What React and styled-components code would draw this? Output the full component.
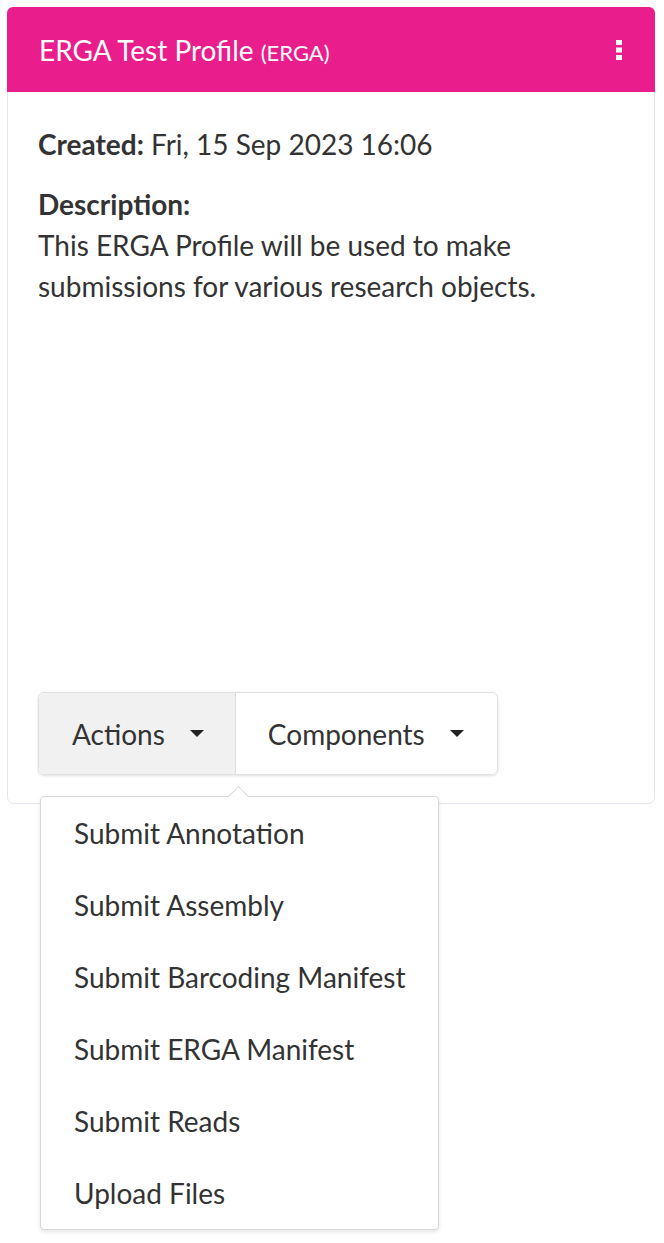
import React from "react";
import styled, { createGlobalStyle } from "styled-components";

const Global = createGlobalStyle`
  html, body { margin: 0; padding: 0; background: #fff; }
  body { font-family: Lato, "Open Sans", sans-serif; color: #333; }
  * { box-sizing: border-box; }
`;

const Page = styled.div`
  padding: 7px 9px 0 7px;
  position: relative;
  min-height: 1243px;
`;

const Card = styled.div`
  width: 648px;
  height: 797px;
  border: 1px solid #e2e7ee;
  border-radius: 7px;
  display: flex;
  flex-direction: column;
  background: #fff;
  position: relative;
`;

const Header = styled.div`
  height: 85px;
  background: #e91e8c;
  border-radius: 6px 6px 0 0;
  margin: -1px -1px 0 -1px;
  display: flex;
  align-items: center;
  justify-content: space-between;
  padding: 0 32px 0 32px;
  color: #fff;
`;

const Title = styled.div`
  font-size: 28px;
  font-weight: 400;
  color: #fff;
`;

const Small = styled.span`
  font-size: 22px;
`;

const Body = styled.div`
  flex: 1;
  display: flex;
  flex-direction: column;
  padding: 32px 30px 28px 30px;
`;

const Line = styled.div`
  font-size: 28px;
  line-height: 41px;
  margin-bottom: ${(p) => p.$mb || 0}px;
`;

const Bold = styled.span`
  font-weight: 700;
`;

const Group = styled.div`
  margin-top: auto;
  align-self: flex-start;
  display: flex;
  border: 1px solid #e0e0e0;
  border-radius: 6px;
  box-shadow: 0 1px 3px rgba(0, 0, 0, 0.12);
  height: 83px;
  position: relative;
`;

const Btn = styled.div`
  display: flex;
  align-items: center;
  gap: 25px;
  font-size: 28px;
  color: #333;
  background: ${(p) => (p.$active ? "#f1f1f1" : "#fff")};
  padding: 0 ${(p) => p.$pr}px 0 ${(p) => p.$pl}px;
  border-radius: ${(p) => (p.$first ? "6px 0 0 6px" : "0 6px 6px 0")};
  & + & {
    border-left: 1px solid #dedede;
  }
`;

const Caret = styled.span`
  width: 0;
  height: 0;
  border-left: 7px solid transparent;
  border-right: 7px solid transparent;
  border-top: 7px solid #222;
`;

const Menu = styled.div`
  position: absolute;
  left: 40px;
  top: 796px;
  width: 399px;
  background: #fff;
  border: 1px solid #d8d8d8;
  border-radius: 4px;
  box-shadow: 0 2px 4px rgba(0, 0, 0, 0.1);
  z-index: 5;
  &::before {
    content: "";
    position: absolute;
    top: -8px;
    left: 190px;
    width: 14px;
    height: 14px;
    background: #fff;
    border-left: 1px solid #d8d8d8;
    border-top: 1px solid #d8d8d8;
    transform: rotate(45deg);
  }
`;

const Item = styled.div`
  height: 72px;
  display: flex;
  align-items: center;
  padding-left: 33px;
  font-size: 28px;
  color: #333;
  position: relative;
`;

const Kebab = () => (
  <svg width="8" height="22" viewBox="0 0 8 22">
    <rect x="1" y="1" width="6" height="5" fill="#fff" />
    <rect x="1" y="8.5" width="6" height="5" fill="#fff" />
    <rect x="1" y="16" width="6" height="5" fill="#fff" />
  </svg>
);

const items = [
  "Submit Annotation",
  "Submit Assembly",
  "Submit Barcoding Manifest",
  "Submit ERGA Manifest",
  "Submit Reads",
  "Upload Files",
];

export default function App() {
  return (
    <Page>
      <Global />
      <Card>
        <Header>
          <Title>
            ERGA Test Profile <Small>(ERGA)</Small>
          </Title>
          <Kebab />
        </Header>
        <Body>
          <Line $mb={19}>
            <Bold>Created:</Bold> Fri, 15 Sep 2023 16:06
          </Line>
          <Line>
            <Bold>Description:</Bold>
          </Line>
          <Line>This ERGA Profile will be used to make</Line>
          <Line>submissions for various research objects.</Line>
          <Group>
            <Btn $active $first $pl={33} $pr={31}>
              Actions <Caret />
            </Btn>
            <Btn $pl={32} $pr={33}>
              Components <Caret />
            </Btn>
          </Group>
        </Body>
      </Card>
      <Menu>
        {items.map((t) => (
          <Item key={t}>{t}</Item>
        ))}
      </Menu>
    </Page>
  );
}
